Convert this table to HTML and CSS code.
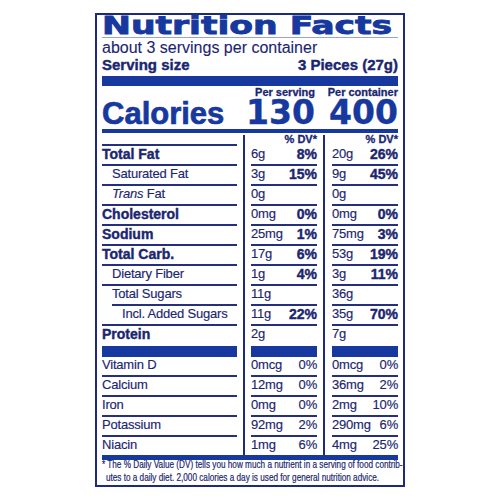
FILE: index.html
```html
<!DOCTYPE html>
<html lang="en">
<head>
    <meta charset="UTF-8">
    <meta name="viewport" content="width=device-width, initial-scale=1.0">
    <title>Nutrition Facts</title>
    <link rel="stylesheet" href="styles.css">
</head>
<body>
    <div class="label">
        <h1 class="title"><span>Nutrition Facts</span></h1>
        <p class="servings">about 3 servings per container</p>
        <div class="serving-size">
            <span>Serving size</span>
            <span>3 Pieces (27g)</span>
        </div>
        <div class="bar"></div>

        <div class="cal-head">
            <span></span>
            <span>Per serving</span>
            <span>Per container</span>
        </div>
        <div class="calories">
            <span class="cal-label">Calories</span>
            <span class="cal-num">130</span>
            <span class="cal-num">400</span>
        </div>

        <div class="table">
            <!-- nutrient names -->
            <div class="col names">
                <div class="row head"></div>
                <div class="row strong">Total Fat</div>
                <div class="row indent">Saturated Fat</div>
                <div class="row indent"><span><i>Trans</i> Fat</span></div>
                <div class="row strong">Cholesterol</div>
                <div class="row strong">Sodium</div>
                <div class="row strong">Total Carb.</div>
                <div class="row indent">Dietary Fiber</div>
                <div class="row sugars">Total Sugars</div>
                <div class="row indent2">Incl. Added Sugars</div>
                <div class="row strong protein">Protein</div>
                <div class="row">Vitamin D</div>
                <div class="row">Calcium</div>
                <div class="row">Iron</div>
                <div class="row">Potassium</div>
                <div class="row last">Niacin</div>
            </div>

            <!-- per serving -->
            <div class="col vals">
                <div class="row head">% DV*</div>
                <div class="row"><span>6g</span><b>8%</b></div>
                <div class="row"><span>3g</span><b>15%</b></div>
                <div class="row"><span>0g</span></div>
                <div class="row"><span>0mg</span><b>0%</b></div>
                <div class="row"><span>25mg</span><b>1%</b></div>
                <div class="row"><span>17g</span><b>6%</b></div>
                <div class="row"><span>1g</span><b>4%</b></div>
                <div class="row"><span>11g</span></div>
                <div class="row"><span>11g</span><b>22%</b></div>
                <div class="row protein"><span>2g</span></div>
                <div class="row"><span>0mcg</span><span>0%</span></div>
                <div class="row"><span>12mg</span><span>0%</span></div>
                <div class="row"><span>0mg</span><span>0%</span></div>
                <div class="row"><span>92mg</span><span>2%</span></div>
                <div class="row last"><span>1mg</span><span>6%</span></div>
            </div>

            <!-- per container -->
            <div class="col vals wide">
                <div class="row head">% DV*</div>
                <div class="row"><span>20g</span><b>26%</b></div>
                <div class="row"><span>9g</span><b>45%</b></div>
                <div class="row"><span>0g</span></div>
                <div class="row"><span>0mg</span><b>0%</b></div>
                <div class="row"><span>75mg</span><b>3%</b></div>
                <div class="row"><span>53g</span><b>19%</b></div>
                <div class="row"><span>3g</span><b>11%</b></div>
                <div class="row"><span>36g</span></div>
                <div class="row"><span>35g</span><b>70%</b></div>
                <div class="row protein"><span>7g</span></div>
                <div class="row"><span>0mcg</span><span>0%</span></div>
                <div class="row"><span>36mg</span><span>2%</span></div>
                <div class="row"><span>2mg</span><span>10%</span></div>
                <div class="row"><span>290mg</span><span>6%</span></div>
                <div class="row last"><span>4mg</span><span>25%</span></div>
            </div>
        </div>

        <div class="foot-bar"></div>
        <p class="footnote">* The % Daily Value (DV) tells you how much a nutrient in a serving of food contrib-<br>utes to a daily diet. 2,000 calories a day is used for general nutrition advice.</p>
    </div>
</body>
</html>
```

FILE: styles.css
```css
* {
    box-sizing: border-box;
}

body {
    margin: 0;
    background-color: #fff;
    color: #1b2670;
    font-family: "Liberation Sans", Arial, sans-serif;
}

.label {
    width: 310px;
    margin: 13px auto 0;
    padding: 0 5px 1px;
    border: 2px solid #1d2b7a;
}

.title {
    margin: 0;
    height: 23px;
    font-family: "DejaVu Sans", sans-serif;
    font-weight: bold;
    font-size: 24px;
    line-height: 22px;
    color: #17389e;
    white-space: nowrap;
    border-bottom: 1px solid #9aa3d0;
}

.title span {
    display: inline-block;
    transform: scaleX(1.44);
    transform-origin: left center;
    -webkit-text-stroke: 0.8px #17389e;
}

.servings {
    margin: 0;
    padding-top: 1px;
    height: 19px;
    font-size: 16px;
    line-height: 18px;
    -webkit-text-stroke: 0.1px #1b2670;
}

.serving-size {
    display: flex;
    justify-content: space-between;
    font-weight: bold;
    font-size: 15px;
    line-height: 16px;
    -webkit-text-stroke: 0.4px #1b2670;
}

.bar {
    height: 10px;
    margin-top: 3px;
    background-color: #17389e;
}

.cal-head,
.calories {
    display: grid;
    grid-template-columns: 135px 78px 83px;
    text-align: right;
}

.cal-head {
    margin-top: 1px;
    font-size: 11px;
    font-weight: bold;
    line-height: 11px;
    -webkit-text-stroke: 0.3px #1b2670;
}

.calories {
    align-items: baseline;
    padding-bottom: 1px;
    color: #17389e;
    line-height: 28px;
    margin-top: 1px;
}

.cal-label {
    text-align: left;
    font-size: 31px;
    font-weight: bold;
    -webkit-text-stroke: 0.7px #17389e;
}

.cal-num {
    font-family: "DejaVu Sans", sans-serif;
    font-size: 33px;
    font-weight: bold;
    -webkit-text-stroke: 0.4px #17389e;
}

.table {
    display: flex;
    border-top: 4px solid #17389e;
}

.col.names {
    width: 135px;
}

.col.vals {
    width: 74px;
    margin-left: 6px;
    margin-top: 2px;
    padding-left: 6px;
    border-left: 2px solid #1d2b7a;
}

.col.vals.wide {
    width: 75px;
    padding-left: 7px;
}

.row {
    display: flex;
    justify-content: space-between;
    height: 20px;
    font-size: 13px;
    line-height: 16px;
    letter-spacing: -0.2px;
    white-space: nowrap;
    border-bottom: 2px solid #24307f;
    -webkit-text-stroke: 0.15px #1b2670;
}

.row b {
    font-size: 14px;
    letter-spacing: 0;
    -webkit-text-stroke: 0.4px #1b2670;
}

.row.strong {
    font-size: 14px;
    font-weight: bold;
    letter-spacing: 0;
    -webkit-text-stroke: 0.4px #1b2670;
}

.row.indent {
    padding-left: 10px;
}

.row.sugars {
    margin-left: 10px;
}

.row.indent2 {
    padding-left: 20px;
}

.row.head {
    height: 13px;
}

.vals .row.head {
    height: 11px;
    justify-content: flex-end;
    border-bottom: none;
    font-size: 11px;
    font-weight: bold;
    line-height: 9px;
    letter-spacing: 0;
    -webkit-text-stroke: 0.3px #1b2670;
}

.row.protein {
    height: 31px;
    border-bottom: 11px solid #17389e;
}

.row.last {
    height: 18px;
    border-bottom: none;
}

.foot-bar {
    height: 5px;
    background-color: #17389e;
}

.footnote {
    width: 360px;
    margin: -2px 0 0;
    padding-left: 5px;
    text-indent: -5px;
    font-size: 10.5px;
    line-height: 13px;
    white-space: nowrap;
    transform: scaleX(0.78);
    transform-origin: left top;
    -webkit-text-stroke: 0.2px #1b2670;
}
```
